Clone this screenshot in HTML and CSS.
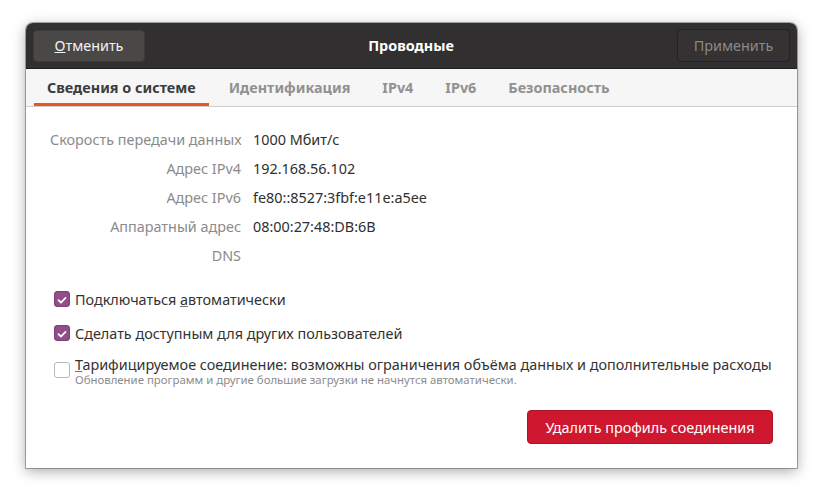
FILE: index.html
```html
<!DOCTYPE html>
<html lang="ru">
<head>
<meta charset="utf-8">
<link rel="stylesheet" href="styles.css">
</head>
<body>
<div class="dialog">
  <div class="header">
    <button class="btn cancel"><u>О</u>тменить</button>
    <div class="title">Проводные</div>
    <button class="btn apply">Применить</button>
  </div>
  <div class="tabs">
    <div class="tab active">Сведения о системе</div>
    <div class="tab">Идентификация</div>
    <div class="tab">IPv4</div>
    <div class="tab">IPv6</div>
    <div class="tab">Безопасность</div>
  </div>
  <div class="content">
    <div class="info">
      <div class="label">Скорость передачи данных</div><div class="value">1000 Мбит/с</div>
      <div class="label">Адрес IPv4</div><div class="value">192.168.56.102</div>
      <div class="label">Адрес IPv6</div><div class="value">fe80::8527:3fbf:e11e:a5ee</div>
      <div class="label">Аппаратный адрес</div><div class="value">08:00:27:48:DB:6B</div>
      <div class="label">DNS</div><div class="value"></div>
    </div>
    <div class="checks">
      <label class="check">
        <span class="box on"><svg viewBox="0 0 16 16" width="16" height="16"><path d="M4 8.2 L6.8 11 L12 5.5" fill="none" stroke="#fff" stroke-width="2" stroke-linecap="round" stroke-linejoin="round"/></svg></span>
        <span class="ctext">Подключаться <u>а</u>втоматически</span>
      </label>
      <label class="check">
        <span class="box on"><svg viewBox="0 0 16 16" width="16" height="16"><path d="M4 8.2 L6.8 11 L12 5.5" fill="none" stroke="#fff" stroke-width="2" stroke-linecap="round" stroke-linejoin="round"/></svg></span>
        <span class="ctext">Сделать доступным для <u>д</u>ругих пользователей</span>
      </label>
      <label class="check metered">
        <span class="box"></span>
        <span class="ctext">
          <span class="main"><u>Т</u>арифицируемое соединение: возможны ограничения объёма данных и дополнительные расходы</span>
          <span class="sub">Обновление программ и другие большие загрузки не начнутся автоматически.</span>
        </span>
      </label>
    </div>
    <div class="actions">
      <button class="btn danger">Удалить профиль соединения</button>
    </div>
  </div>
</div>
</body>
</html>
```

FILE: styles.css
```css
* { box-sizing: border-box; }
html, body { margin: 0; padding: 0; background: #ffffff; }
body {
  font-family: "Noto Sans", "Open Sans", sans-serif;
  font-size: 14.4px;
  color: #3d3d3d;
  padding: 23px 26px 30px 26px;
  min-height: 100vh;
}
.dialog {
  width: 771px;
  height: 445px;
  background: #ffffff;
  border-radius: 7px 7px 0 0;
  box-shadow: 0 3px 14px rgba(0,0,0,0.35), 0 0 0 1px rgba(0,0,0,0.3);
  display: flex;
  flex-direction: column;
  overflow: hidden;
}
.header {
  height: 46px;
  background: #312f2f;
  display: flex;
  align-items: center;
  justify-content: space-between;
  padding: 0 7px;
  border-bottom: 1px solid #1e1c1c;
}
.btn {
  font-family: inherit;
  font-size: 14.4px;
  border-radius: 4px;
  cursor: default;
}
.cancel {
  width: 112px;
  height: 32px;
  background: #4a4847;
  border: 1px solid #3c3a39;
  color: #f2f2f2;
}
.apply {
  width: 113px;
  height: 33px;
  background: #343232;
  border: 1px solid #252323;
  color: #8c8985;
}
.title {
  color: #ffffff;
  font-weight: bold;
  font-size: 14.4px;
}
.tabs {
  height: 38px;
  background: #f6f6f6;
  border-bottom: 1px solid #cfcfcf;
  display: flex;
  padding-left: 8px;
}
.tab {
  padding: 0 16px;
  display: flex;
  align-items: center;
  font-weight: bold;
  font-size: 14.4px;
  color: #919191;
  border-bottom: 3px solid transparent;
  padding-top: 2px;
}
.tab.active {
  padding: 2px 13px 0 13px;
  color: #3d3d3d;
  border-bottom-color: #e95420;
  margin-right: 4px;
}
.content {
  flex: 1;
  display: flex;
  flex-direction: column;
  padding: 18px 24px 24px 24px;
}
.info {
  display: grid;
  grid-template-columns: 191px 1fr;
  column-gap: 12px;
  grid-auto-rows: 29px;
  align-items: center;
}
.label {
  text-align: right;
  color: #8b8b8b;
  white-space: nowrap;
}
.value {
  color: #2f2f2f;
}
.checks {
  margin-top: 19px;
  padding-left: 4px;
  display: flex;
  flex-direction: column;
  gap: 14px;
}
.check {
  display: flex;
  align-items: center;
  gap: 5px;
  color: #333;
  height: 20px;
}
.box {
  width: 16px;
  height: 16px;
  border-radius: 3px;
  border: 1px solid #bcb8b4;
  background: #fff;
  flex: none;
  display: flex;
}
.box.on {
  background: #924d8b;
  border-color: #7d3f77;
}
.check u { text-decoration-color: #777; }
.metered {
  height: 32px;
  margin-top: -1px;
  align-items: flex-start;
}
.metered .box { margin-top: 6px; }
.metered .ctext { display: flex; flex-direction: column; }
.main { line-height: 17px; }
.sub {
  font-size: 11.4px;
  color: #8c8c8c;
  line-height: 13px;
}
.actions {
  margin-top: auto;
  display: flex;
  justify-content: flex-end;
}
.danger {
  width: 246px;
  height: 34px;
  background: #cf1830;
  border: 1px solid #b01428;
  color: #ffffff;
}
```
